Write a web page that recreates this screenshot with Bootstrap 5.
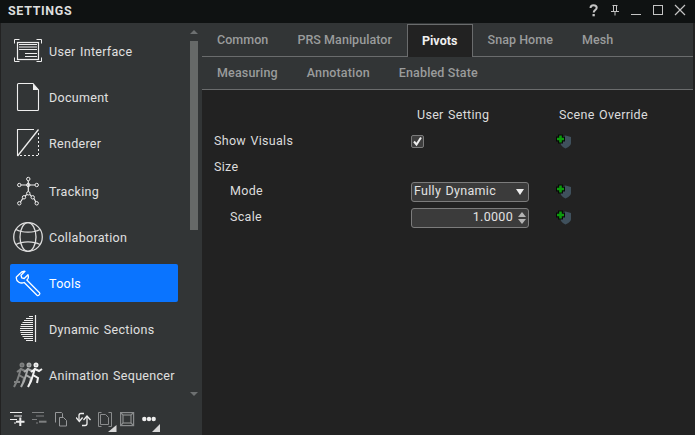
<!DOCTYPE html>
<html lang="en">
<head>
<meta charset="UTF-8">
<title>Settings</title>
<link href="https://cdn.jsdelivr.net/npm/bootstrap@5.3.3/dist/css/bootstrap.min.css" rel="stylesheet">
<style>
html, body { height: 100%; overflow: hidden; }
body { font-family: Roboto, "Liberation Sans", sans-serif; font-size: 12.5px; letter-spacing: .3px; word-spacing: 1px; background: #222; color: #dcdcdc; }
.win { width: 695px; height: 435px; }
.titlebar { height: 23px; background: #0f1212; padding-left: 8px; padding-right: 1px; }
.titlebar .ttl { font-weight: 700; font-size: 12.5px; letter-spacing: .65px; color: #dedede; }
.titlebar svg { display: block; }
.body-row { height: 412px; }
.side { width: 201px; margin-left: 1px; background: #323536; }
.side-top { height: 376px; }
.side-list { width: 186px; padding: 9px 0 0 9px; }
.side-item { height: 38px; width: 168px; margin-bottom: 8px; border-radius: 2px; color: #e0e0e0; white-space: nowrap; }
.side-item span { padding-top: 2px; }
.side-item.gap-extra { margin-bottom: 10px; }
.side-item.on { background: #0a74ff; color: #fff; }
.side-ico { width: 39px; flex: none; }
.side-ico svg { display: block; }
.sbar { width: 8px; margin-left: 3px; padding-top: 7px; }
.sbar-up { width: 0; height: 0; border: 4px solid transparent; border-top: 0; border-bottom: 4px solid #6d7071; }
.sbar-dn { width: 0; height: 0; border: 4px solid transparent; border-bottom: 0; border-top: 4px solid #6d7071; }
.sbar-thumb { height: 189px; background: #666968; margin-top: 7px; margin-bottom: 162px; }
.side-tools { padding-top: 12px; padding-left: 9px; }
.side-tools svg { display: block; }
.pane { min-width: 0; }
.tabrow { height: 34px; margin-right: 2px; background: #323536; border-bottom: 1px solid #6a6c6d; padding-left: 1px; color: #9a9c9c; font-weight: 500; letter-spacing: .05px; word-spacing: 0; }
.tabrow2 { height: 33px; letter-spacing: .15px; }
.tabx { padding: 0 14px; height: 33px; line-height: 34px; margin-right: 1px; }
.tabx.on { background: #222; color: #f0f0f0; border: 1px solid #6a6c6d; border-bottom: 0; height: 33px; margin-top: 1px; line-height: 31px; font-weight: 700; }
.tabx.sub { line-height: 32px; }
.form-zone { background: #222; padding: 12px 0 0 12px; color: #dcdcdc; }
.frow { height: 26px; }
.frow.tight { margin-bottom: -2px; }
.fl { width: 197px; flex: none; }
.fl.ind { padding-left: 16px; }
.fc { width: 145px; flex: none; }
.fc.head { padding-left: 6px; }
.ovr-head { padding-left: 3px; }
.ovr svg { display: block; }
.chk { width: 13px; height: 13px; background: #3e3e3e; border: 1px solid #7b7b7b; border-radius: 2px; }
.chk svg { display: block; }
.combo { width: 118px; height: 20px; margin-top: 1px; border: 1px solid #7c7c7c; border-radius: 3px; background: #3b3b3b; padding: 0 4px 0 2px; color: #e2e2e2; }
.spin { width: 118px; height: 20px; margin-top: 1px; border: 1px solid #7c7c7c; border-radius: 3px; background: #3b3b3b; padding: 0 2px 0 0; color: #e2e2e2; gap: 5px; }
.tri-dn { width: 0; height: 0; border: 4px solid transparent; border-bottom: 0; border-top: 6px solid #eee; }
.spin-a { width: 0; height: 0; border: 4.5px solid transparent; border-top: 0; border-bottom: 5px solid #b4b4b4; margin-bottom: 2px; }
.spin-b { width: 0; height: 0; border: 4.5px solid transparent; border-bottom: 0; border-top: 5px solid #b4b4b4; }
</style>
</head>
<body>
<div class="win d-flex flex-column">
  <div class="titlebar d-flex align-items-center justify-content-between">
    <span class="ttl">SETTINGS</span>
    <div class="d-flex align-items-center">
      <svg width="22" height="23" viewBox="0 0 22 23"><path d="M6.500 8C6.500 6 8 5.200 9.500 5.200S12.700 6 12.700 7.800c0 2.200-3 2.400-3 4.700" fill="none" stroke="#c4c4c4" stroke-width="2"/><rect x="8.500" y="14" width="2.300" height="2.300" fill="#c4c4c4"/></svg>
      <svg width="22" height="23" viewBox="0 0 22 23"><path d="M6.500 5.500h5M7.500 5.500v6M10.500 5.500v6M5 11.500h8M9 11.500v4" fill="none" stroke="#c4c4c4"/></svg>
      <svg width="22" height="23" viewBox="0 0 22 23"><path d="M3 14.500h10" stroke="#c4c4c4"/></svg>
      <svg width="22" height="23" viewBox="0 0 22 23"><rect x="3.500" y="5.500" width="9" height="9" fill="none" stroke="#c4c4c4"/></svg>
      <svg width="22" height="23" viewBox="0 0 22 23"><path d="M3 5l10 10M13 5L3 15" stroke="#c4c4c4" stroke-width="1.200"/></svg>
    </div>
  </div>
  <div class="body-row d-flex">
    <div class="side d-flex flex-column">
      <div class="side-top d-flex">
        <div class="side-list">
          <div class="side-item d-flex align-items-center">
            <div class="side-ico"><svg width="36" height="36" viewBox="0 0 36 36" fill="none" stroke="#eee"><path d="M4.500 10.500v-4h5M26.500 6.500h5v4M4.500 24.500v4h5M26.500 28.500h5v-4"/><rect x="7.500" y="9.500" width="21" height="17" stroke-width="1.200"/><path d="M9 11.500h18M9 14h18M9 16.500h18M15 20.500h12M15 23.500h12"/></svg></div>
            <span>User Interface</span>
          </div>
          <div class="side-item d-flex align-items-center">
            <div class="side-ico"><svg width="36" height="36" viewBox="0 0 36 36" fill="none"><path d="M7.500 5.500q0-1 1-1H23L28.500 11v19.500q0 1-1 1h-19q-1 0-1-1z" stroke="#eee" stroke-width="1.100"/><path d="M23 4.500l5.500 6.500H23z" fill="#eee"/></svg></div>
            <span>Document</span>
          </div>
          <div class="side-item gap-extra d-flex align-items-center">
            <div class="side-ico"><svg width="36" height="36" viewBox="0 0 36 36" fill="none" stroke="#eee"><path d="M7.500 31V4.500H24" stroke-width="1.100"/><path d="M7.500 31L28.500 4.500" stroke-width="1.300"/><path d="M28.500 8v23M10 30.500h18" stroke-dasharray="2 2"/></svg></div>
            <span>Renderer</span>
          </div>
          <div class="side-item d-flex align-items-center">
            <div class="side-ico"><svg width="36" height="36" viewBox="0 0 36 36" fill="none" stroke="#eee"><path d="M18.300 8v10.500M11 12h14M16.800 21.500l-1.800 1.600M19.800 21.500l1.600 1.600M12.700 25.500l-2.200 3.500M24 25.500l1.800 3.500" stroke-width="1.200"/><circle cx="18.300" cy="6" r="1.700"/><circle cx="9.300" cy="12" r="1.700"/><circle cx="18.300" cy="12" r="1.700"/><circle cx="26.700" cy="12" r="1.700"/><circle cx="18.300" cy="20.300" r="1.700"/><circle cx="14" cy="24.300" r="1.700"/><circle cx="22.700" cy="24.300" r="1.700"/><circle cx="9.300" cy="30.300" r="1.700"/><circle cx="26.700" cy="30.300" r="1.700"/></svg></div>
            <span>Tracking</span>
          </div>
          <div class="side-item d-flex align-items-center">
            <div class="side-ico"><svg width="36" height="36" viewBox="0 0 36 36" fill="none" stroke="#dcdcdc" stroke-width="1.300"><circle cx="18" cy="18" r="14.300"/><ellipse cx="18" cy="18" rx="8" ry="14.300"/><path d="M6 10.500c6 3.500 18 3.500 24 0M6 25.500c6-3.500 18-3.500 24 0"/></svg></div>
            <span>Collaboration</span>
          </div>
          <div class="side-item on d-flex align-items-center">
            <div class="side-ico"><svg width="36" height="36" viewBox="0 0 36 36" fill="none" stroke="#fff" stroke-width="1.300" stroke-linejoin="round"><path d="M15 6.300L11 10.300l.7 2.500 2.500.7L18 9.700c.8 2.200.2 4.200-1.200 5.300L29.500 27.700c1.200 1.300-1.200 3.700-2.500 2.500L14.200 17.500C10.500 19 6.300 16.800 6.300 13c0-.4 0-.7.1-1L10 8.500c1-1.500 3-2.400 5-2.200z"/></svg></div>
            <span>Tools</span>
          </div>
          <div class="side-item d-flex align-items-center">
            <div class="side-ico"><svg width="36" height="36" viewBox="0 0 36 36" fill="none" stroke="#eee"><path d="M25.500 4v27" stroke-width="1.200"/><path d="M19 5.500h4M16 7.500h7M14 9.500h9M12.500 11.500h10.500M11 13.500h12M10.500 15.500h12.500M10 17.500h13M10 19.500h13M10.500 21.500h12.500M11 23.500h12M12.500 25.500h10.500M14 27.500h9M16 29.500h7"/></svg></div>
            <span>Dynamic Sections</span>
          </div>
          <div class="side-item d-flex align-items-center">
            <div class="side-ico"><svg width="36" height="36" viewBox="0 0 36 36" fill="none" stroke-width="2"><g stroke="#7f8181" transform="translate(-14)"><circle cx="26" cy="8" r="1.500"/><path d="M25 11l-2 7 5 3-1 5M23 18l-2 6-3 6M25 12l4 2M25 12l-4 3"/></g><path d="M4 25h6" stroke="#7f8181"/><g stroke="#a9abab" transform="translate(-7)"><circle cx="26" cy="8" r="1.500"/><path d="M25 11l-2 7 5 3-1 5M23 18l-2 6-3 6M25 12l4 2M25 12l-4 3"/></g><g stroke="#f2f2f2"><circle cx="26" cy="8" r="1.500"/><path d="M25 11l-2 7 5 3-1 5M23 18l-2 6-3 6M25 12l4 2 3-2M25 12l-4 3"/></g></svg></div>
            <span>Animation Sequencer</span>
          </div>
        </div>
        <div class="sbar d-flex flex-column align-items-center">
          <div class="sbar-up"></div>
          <div class="sbar-thumb w-100"></div>
          <div class="sbar-dn"></div>
        </div>
      </div>
      <div class="side-tools d-flex">
        <svg width="22" height="22" viewBox="0 0 22 22" fill="none" stroke="#eee"><path d="M0 1.500h12M4 5h8M0 8.500h7M4 12h2"/><path d="M10.300 6.500v8.500M6 10.700h8.500" stroke-width="2"/></svg>
        <svg width="22" height="22" viewBox="0 0 22 22" fill="none" stroke="#7e8081"><path d="M0 1.500h12M4 5h8M0 8.500h5M4 12h2"/><path d="M7 10.700h7.500" stroke-width="2"/></svg>
        <svg width="22" height="22" viewBox="0 0 22 22" fill="none" stroke="#96989a"><path d="M1.500 11.500v-10h6l1 1v4"/><path d="M5.500 6.500h4l3 3v5.500H5.500z"/></svg>
        <svg width="22" height="22" viewBox="0 0 22 22" fill="none" stroke="#eee" stroke-width="1.300"><path d="M8 2.500H5c-1 0-2 1-2 2V10M6 14.500h3c1 0 2-1 2-2V6"/><path d="M0 6.500l3.300 4 3.300-4M7.500 9L11 5l3.500 4"/></svg>
        <svg width="22" height="22" viewBox="0 0 22 22" fill="none" stroke="#8a8c8d"><path d="M3.500 1.500H.5v14h3M10.500 1.500h3v14h-3"/><path d="M2.500 3.500h5l3 3v7h-8z"/><path d="M10 21l8.500-7v7z" fill="#d8d8d8" stroke="none"/></svg>
        <svg width="22" height="22" viewBox="0 0 22 22" fill="none" stroke="#8a8c8d" stroke-width="1.200"><rect x=".6" y="1.600" width="13" height="13"/><rect x="3" y="4" width="8" height="8"/><path d="M.6 1.600L3 4M13.600 1.600L11 4M.6 14.600L3 12M13.600 14.600L11 12"/></svg>
        <svg width="22" height="22" viewBox="0 0 22 22"><circle cx="2.300" cy="8" r="2.200" fill="#eee"/><circle cx="7" cy="8" r="2.200" fill="#eee"/><circle cx="11.700" cy="8" r="2.200" fill="#eee"/><path d="M10 21l8-8v8z" fill="#d8d8d8"/></svg>
      </div>
    </div>
    <div class="pane flex-grow-1 d-flex flex-column">
      <div class="tabrow d-flex">
        <div class="tabx">Common</div>
        <div class="tabx">PRS Manipulator</div>
        <div class="tabx on">Pivots</div>
        <div class="tabx">Snap Home</div>
        <div class="tabx">Mesh</div>
      </div>
      <div class="tabrow tabrow2 d-flex">
        <div class="tabx sub">Measuring</div>
        <div class="tabx sub">Annotation</div>
        <div class="tabx sub">Enabled State</div>
      </div>
      <div class="form-zone flex-grow-1">
        <div class="frow d-flex align-items-center">
          <div class="fl"></div><div class="fc head">User Setting</div><div class="ovr-head">Scene Override</div>
        </div>
        <div class="frow d-flex align-items-center">
          <div class="fl">Show Visuals</div>
          <div class="fc"><div class="chk d-flex align-items-center justify-content-center"><svg width="11" height="11" viewBox="0 0 11 11" fill="none"><path d="M2 5.500l2.500 3L9 1.500" stroke="#eee" stroke-width="2"/></svg></div></div>
          <div class="ovr"><svg width="16" height="15" viewBox="0 0 16 15"><path d="M4.500 3L9.500 1.500 15 3V9c0 2.500-3 4.500-5.500 5.500C7 13.500 4.500 11.500 4.500 9z" fill="#3f505c"/><path d="M2 .5h5v2h2v5H7v2H2v-2H0v-5h2z" fill="#080808"/><path d="M3.200 1.500h2.600v2.200H8v2.600H5.800v2.200H3.200V6.300H1V3.700h2.200z" fill="#0c9a0c"/></svg></div>
        </div>
        <div class="frow tight d-flex align-items-center"><div class="fl">Size</div></div>
        <div class="frow d-flex align-items-center">
          <div class="fl ind">Mode</div>
          <div class="fc"><div class="combo d-flex align-items-center justify-content-between"><span>Fully Dynamic</span><span class="tri-dn"></span></div></div>
          <div class="ovr"><svg width="16" height="15" viewBox="0 0 16 15"><path d="M4.500 3L9.500 1.500 15 3V9c0 2.500-3 4.500-5.500 5.500C7 13.500 4.500 11.500 4.500 9z" fill="#3f505c"/><path d="M2 .5h5v2h2v5H7v2H2v-2H0v-5h2z" fill="#080808"/><path d="M3.200 1.500h2.600v2.200H8v2.600H5.800v2.200H3.200V6.300H1V3.700h2.200z" fill="#0c9a0c"/></svg></div>
        </div>
        <div class="frow d-flex align-items-center">
          <div class="fl ind">Scale</div>
          <div class="fc"><div class="spin d-flex align-items-center justify-content-end"><span>1.0000</span><span class="d-flex flex-column"><span class="spin-a"></span><span class="spin-b"></span></span></div></div>
          <div class="ovr"><svg width="16" height="15" viewBox="0 0 16 15"><path d="M4.500 3L9.500 1.500 15 3V9c0 2.500-3 4.500-5.500 5.500C7 13.500 4.500 11.500 4.500 9z" fill="#3f505c"/><path d="M2 .5h5v2h2v5H7v2H2v-2H0v-5h2z" fill="#080808"/><path d="M3.200 1.500h2.600v2.200H8v2.600H5.800v2.200H3.200V6.300H1V3.700h2.200z" fill="#0c9a0c"/></svg></div>
        </div>
      </div>
    </div>
  </div>
</div>
<script src="https://cdn.jsdelivr.net/npm/bootstrap@5.3.3/dist/js/bootstrap.bundle.min.js"></script>
</body>
</html>
